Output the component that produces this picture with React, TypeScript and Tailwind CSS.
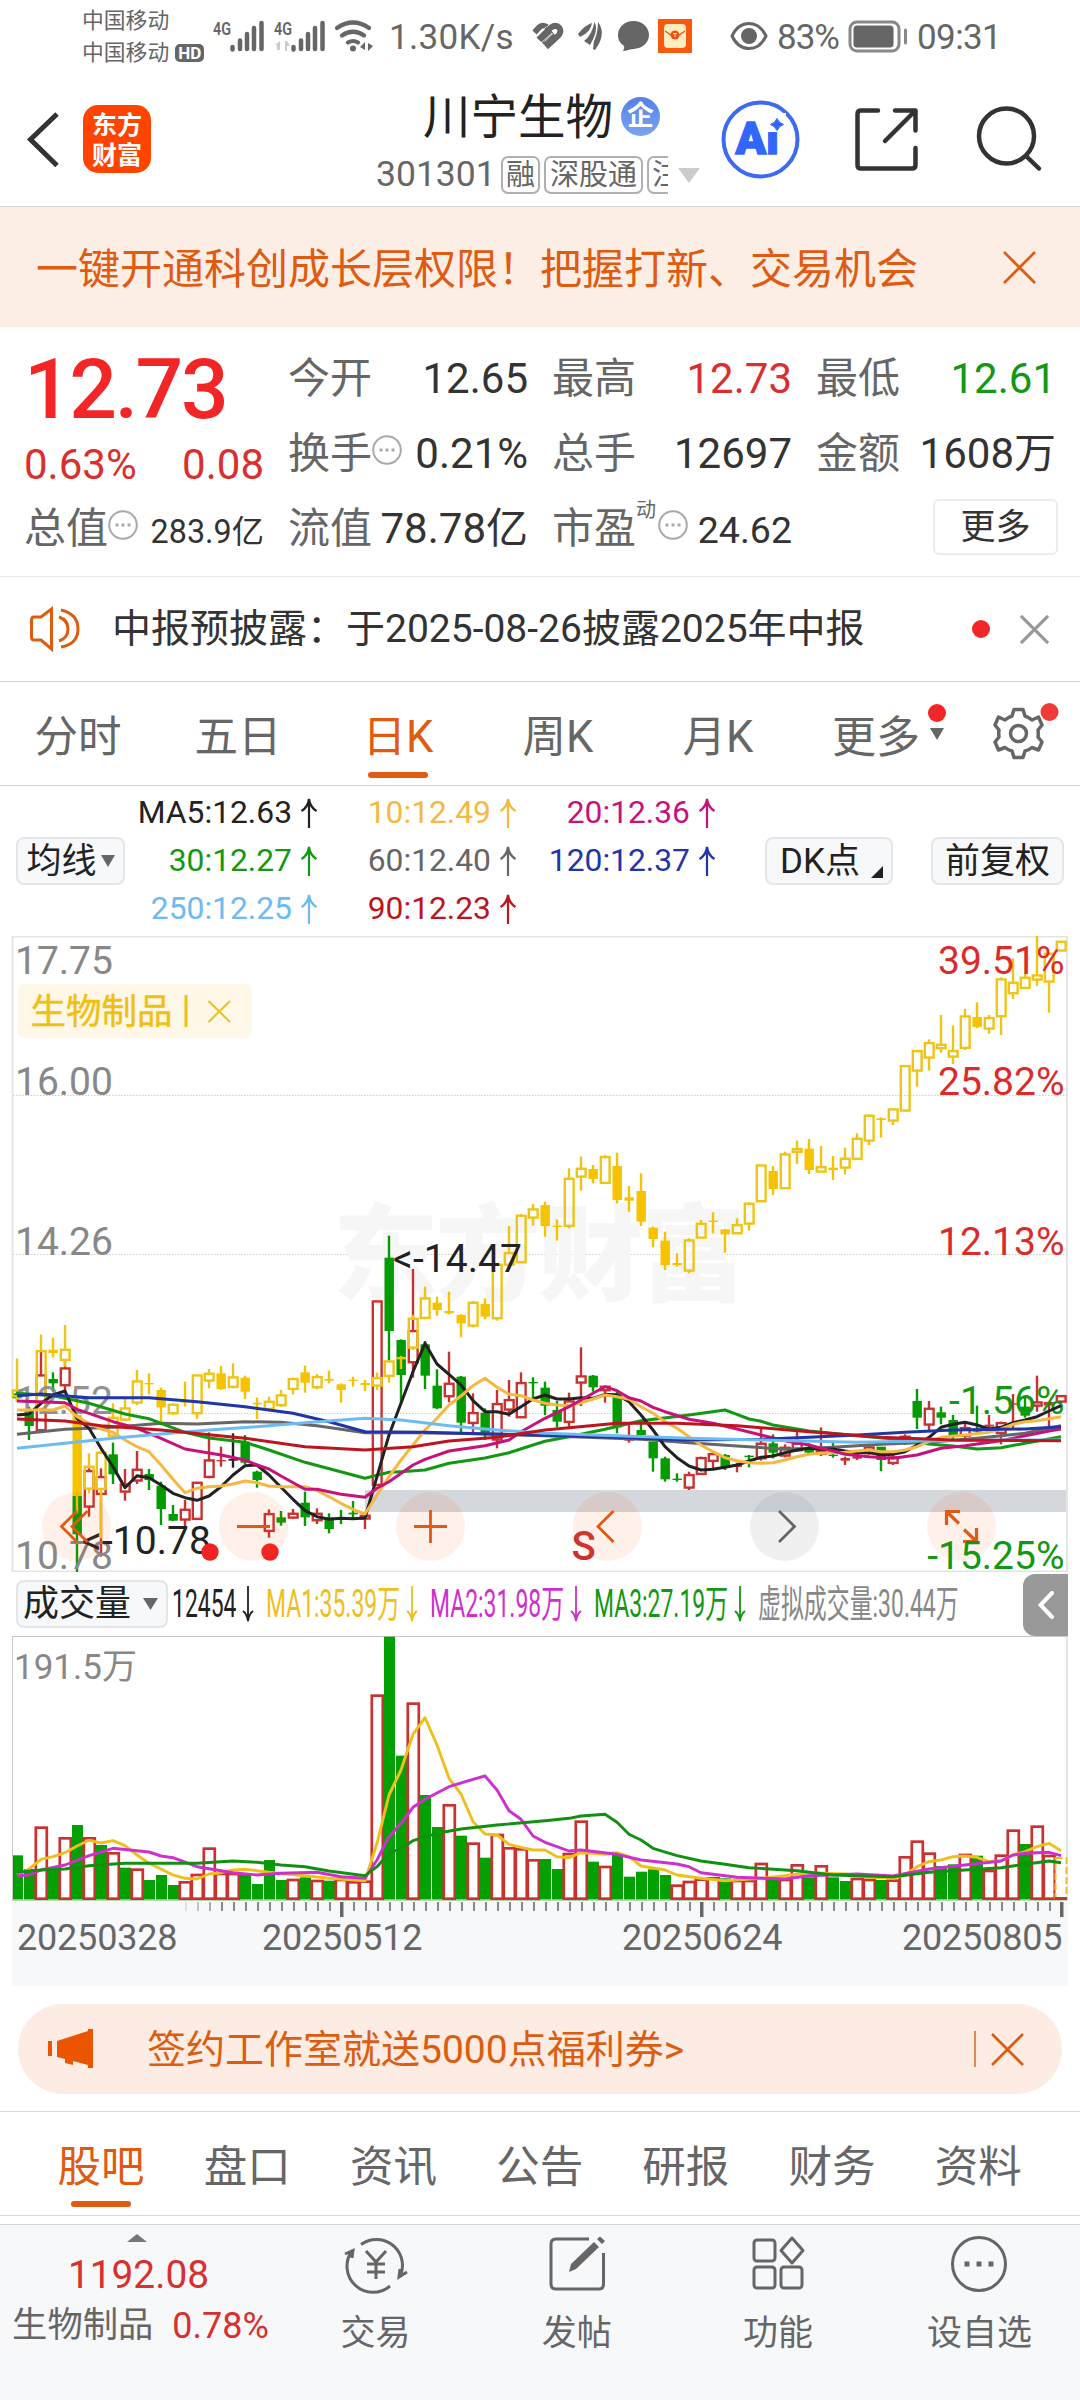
import { ReactNode } from "react";
import clsx from "clsx";

type Kind = "up" | "down" | "flat";
// index, kind, high, body top, body bottom, low (thirds of a pixel below BASE)
type Candle = [number, Kind, number, number, number, number];
type Point = [number, number];

const BASE = 1230;
const VOL_BASE = 1570;
const VOL_BOTTOM = 1899.5;

const RED = "#c93230";
const GREEN = "#029b02";
const YELLOW = "#efc416";

const xAt = (i: number) => 17 + 12 * i;
const yAt = (v: number) => BASE + v / 3;
const volY = (v: number) => VOL_BASE + v / 3;

const stock: Candle[] = [
  [0, "down", 480, 490, 505, 515], [1, "down", 530, 545, 588, 630], [2, "up", 365, 433, 604, 604],
  [3, "down", 427, 447, 460, 485], [4, "up", 392, 412, 469, 490], [5, "down", 780, 797, 913, 1028],
  [6, "up", 715, 720, 833, 860], [7, "up", 715, 738, 795, 980], [8, "down", 638, 673, 733, 762],
  [9, "up", 717, 760, 788, 812], [10, "up", 663, 716, 755, 762], [11, "down", 717, 732, 750, 780],
  [12, "down", 755, 767, 837, 885], [13, "down", 825, 852, 872, 873], [14, "up", 810, 836, 872, 893],
  [15, "up", 755, 755, 870, 870], [16, "up", 607, 688, 744, 745], [17, "up", 650, 690, 694, 710],
  [18, "flat", 610, 687, 692, 713], [19, "down", 615, 635, 698, 703], [20, "down", 722, 725, 750, 773],
  [21, "up", 838, 849, 906, 923], [22, "down", 843, 862, 878, 887], [23, "up", 837, 848, 866, 867],
  [24, "down", 785, 818, 862, 888], [25, "up", 835, 848, 874, 882], [26, "down", 850, 862, 897, 910],
  [27, "down", 840, 864, 868, 882], [28, "down", 813, 848, 853, 865], [29, "up", 845, 854, 869, 897],
  [30, "up", 211, 211, 768, 768], [31, "down", 17, 83, 303, 390], [32, "down", 328, 330, 435, 520],
  [33, "up", 117, 300, 400, 443], [34, "down", 333, 343, 437, 477], [35, "down", 418, 467, 535, 537],
  [36, "up", 365, 458, 502, 517], [37, "down", 438, 440, 578, 610], [38, "up", 490, 546, 582, 610],
  [39, "down", 535, 548, 615, 630], [40, "up", 480, 519, 632, 655], [41, "up", 450, 507, 542, 560],
  [42, "up", 427, 456, 565, 565], [43, "down", 442, 456, 460, 505], [44, "down", 455, 473, 527, 555],
  [45, "down", 513, 540, 575, 592], [46, "up", 488, 511, 579, 590], [47, "up", 352, 436, 461, 528],
  [48, "down", 435, 437, 472, 485], [49, "up", 467, 467, 484, 518], [50, "down", 480, 490, 592, 610],
  [51, "up", 580, 626, 632, 638], [52, "down", 575, 600, 615, 630], [53, "down", 635, 635, 685, 725],
  [54, "down", 680, 685, 748, 755], [55, "down", 730, 746, 750, 755], [56, "up", 725, 732, 776, 780],
  [57, "up", 680, 681, 735, 735], [58, "up", 665, 669, 696, 715], [59, "down", 672, 675, 713, 720],
  [60, "up", 698, 704, 711, 727], [61, "down", 675, 677, 681, 712], [62, "up", 597, 638, 688, 692],
  [63, "down", 613, 640, 668, 685], [64, "up", 643, 650, 680, 682], [65, "up", 605, 638, 664, 665],
  [66, "down", 640, 652, 668, 672], [67, "up", 592, 659, 675, 678], [68, "down", 635, 674, 678, 683],
  [69, "up", 680, 684, 692, 705], [70, "up", 665, 679, 686, 690], [71, "up", 640, 649, 673, 675],
  [72, "down", 650, 650, 690, 723], [73, "up", 675, 679, 702, 705], [74, "up", 613, 617, 642, 645],
  [75, "down", 477, 513, 563, 597], [76, "up", 513, 533, 587, 600], [77, "down", 530, 547, 563, 583],
  [78, "down", 555, 570, 620, 635], [79, "up", 580, 591, 620, 625], [80, "down", 527, 600, 605, 610],
  [81, "up", 555, 584, 590, 600], [82, "up", 575, 576, 612, 643], [83, "up", 492, 520, 524, 600],
  [84, "down", 500, 530, 557, 563], [85, "up", 437, 514, 530, 545], [86, "up", 515, 516, 526, 598],
  [87, "up", 495, 495, 518, 520],
];

const sector: Candle[] = [
  [0, "up", 385, 478, 502, 515], [2, "up", 313, 360, 540, 545], [3, "down", 323, 359, 369, 382],
  [4, "up", 285, 356, 393, 410], [5, "down", 500, 555, 797, 850], [6, "up", 670, 707, 779, 790],
  [7, "up", 655, 665, 780, 925], [8, "up", 520, 560, 620, 622], [9, "up", 500, 532, 572, 573],
  [10, "up", 420, 451, 521, 525], [11, "down", 430, 459, 463, 493], [12, "down", 473, 480, 532, 578],
  [13, "up", 520, 521, 553, 555], [14, "down", 455, 514, 518, 530], [15, "up", 433, 433, 553, 567],
  [16, "up", 417, 428, 455, 475], [17, "down", 408, 430, 477, 480], [18, "up", 400, 439, 474, 475],
  [19, "down", 437, 443, 485, 507], [20, "down", 503, 518, 523, 567], [21, "up", 500, 512, 540, 545],
  [22, "up", 480, 493, 529, 530], [23, "up", 443, 444, 480, 493], [24, "down", 407, 427, 458, 488],
  [25, "up", 432, 438, 475, 478], [26, "down", 422, 447, 452, 460], [27, "down", 460, 463, 480, 518],
  [28, "down", 440, 449, 453, 470], [29, "down", 450, 459, 465, 483], [30, "up", 428, 441, 470, 480],
  [31, "up", 390, 391, 441, 458], [32, "down", 378, 381, 388, 417], [33, "up", 255, 263, 356, 360],
  [34, "up", 170, 202, 267, 268], [35, "down", 200, 218, 240, 257], [36, "down", 185, 243, 250, 253],
  [37, "down", 252, 255, 280, 322], [38, "up", 213, 215, 290, 292], [39, "down", 205, 222, 260, 268],
  [40, "up", 100, 101, 268, 272], [41, "up", -12, 66, 107, 110], [42, "up", -48, -46, 100, 100],
  [43, "up", -78, -65, -34, -13], [44, "down", -85, -75, -12, 20], [45, "down", -32, -13, -9, 32],
  [46, "up", -185, -157, -9, -5], [47, "up", -220, -187, -157, -118], [48, "down", -195, -183, -153, -140],
  [49, "up", -225, -222, -138, -138], [50, "down", -232, -192, -90, -80], [51, "down", -132, -98, -88, -55],
  [52, "down", -170, -117, -25, -12], [53, "down", -10, -7, 27, 52], [54, "down", 5, 32, 105, 120],
  [55, "down", 70, 99, 105, 110], [56, "up", 25, 28, 125, 130], [57, "up", -30, -22, 26, 26],
  [58, "down", -53, -28, -24, 10], [59, "down", -3, -2, 13, 68], [60, "up", -35, -18, 13, 13],
  [61, "up", -83, -82, -16, 2], [62, "up", -197, -197, -83, -83], [63, "down", -192, -177, -123, -105],
  [64, "up", -235, -230, -122, -122], [65, "up", -268, -246, -231, -198], [66, "down", -273, -244, -180, -168],
  [67, "up", -252, -192, -172, -172], [68, "down", -222, -187, -180, -150], [69, "up", -247, -217, -184, -167],
  [70, "up", -290, -277, -210, -210], [71, "up", -347, -346, -265, -255], [72, "down", -338, -335, -330, -277],
  [73, "up", -365, -365, -325, -315], [74, "up", -495, -495, -355, -355], [75, "up", -540, -540, -475, -430],
  [76, "up", -572, -564, -514, -478], [77, "up", -645, -559, -542, -532], [78, "up", -613, -540, -517, -498],
  [79, "up", -663, -644, -543, -540], [80, "down", -683, -639, -609, -605], [81, "up", -645, -639, -601, -589],
  [82, "up", -758, -755, -638, -585], [83, "up", -815, -745, -707, -693], [84, "up", -770, -760, -723, -723],
  [85, "up", -882, -767, -748, -732], [86, "up", -833, -832, -742, -652], [87, "up", -868, -868, -835, -835],
];

const averages: { color: string; points: Point[] }[] = [
  {
    color: "#666666",
    points: [[0, 613], [4, 598], [8, 592], [12, 580], [15, 582], [19, 575], [22, 577], [25, 587], [29, 608], [33, 608], [40, 612], [44, 617], [52, 628], [56, 638], [60, 648], [64, 658], [68, 652], [72, 643], [76, 637], [80, 625], [84, 610], [87, 587]],
  },
  {
    color: "#129812",
    points: [[0, 490], [3, 497], [5, 512], [6, 520], [9, 552], [11, 566], [12, 580], [14, 607], [16, 624], [19, 637], [21, 660], [24, 697], [29, 745], [31, 727], [32, 725], [34, 720], [36, 700], [39, 684], [41, 668], [43, 645], [44, 634], [46, 620], [49, 598], [52, 572], [56, 555], [59, 540], [60, 553], [61, 567], [62, 574], [63, 585], [66, 603], [70, 617], [74, 630], [76, 642], [78, 648], [80, 657], [82, 653], [84, 640], [87, 620]],
  },
  {
    color: "#222222",
    points: [[0, 555], [1, 552], [2, 520], [3, 495], [4, 483], [5, 565], [6, 595], [7, 655], [8, 710], [9, 773], [10, 737], [11, 743], [12, 765], [13, 790], [14, 803], [15, 811], [16, 798], [17, 770], [18, 735], [19, 707], [20, 705], [21, 735], [22, 772], [23, 808], [24, 842], [25, 860], [26, 868], [27, 865], [28, 866], [29, 864], [30, 740], [31, 615], [32, 520], [33, 425], [34, 340], [35, 402], [36, 433], [37, 465], [38, 512], [39, 545], [40, 545], [41, 553], [42, 530], [43, 507], [44, 495], [45, 507], [46, 507], [47, 503], [48, 505], [49, 493], [50, 495], [51, 515], [52, 555], [53, 600], [54, 650], [55, 683], [56, 708], [57, 720], [58, 718], [59, 712], [60, 705], [61, 693], [62, 682], [63, 678], [64, 668], [65, 660], [66, 655], [67, 658], [68, 657], [69, 663], [70, 668], [71, 667], [72, 675], [73, 673], [74, 665], [75, 645], [76, 622], [77, 592], [78, 583], [79, 577], [80, 585], [81, 597], [82, 592], [83, 578], [84, 570], [85, 560], [86, 543], [87, 527]],
  },
  {
    color: "#f5b942",
    points: [[0, 540], [3, 540], [4, 528], [5, 560], [6, 580], [7, 597], [8, 607], [9, 630], [10, 650], [11, 665], [12, 705], [13, 748], [14, 788], [15, 775], [16, 770], [17, 768], [18, 762], [19, 753], [20, 758], [21, 768], [22, 770], [24, 770], [25, 782], [26, 800], [27, 820], [28, 838], [29, 852], [30, 795], [31, 740], [32, 690], [33, 645], [34, 600], [35, 565], [36, 525], [37, 498], [38, 467], [39, 445], [40, 472], [41, 493], [42, 497], [43, 510], [44, 520], [45, 525], [46, 527], [47, 518], [48, 507], [49, 495], [50, 500], [51, 508], [52, 530], [53, 550], [54, 575], [55, 595], [56, 620], [57, 645], [58, 665], [59, 683], [60, 692], [61, 698], [62, 700], [63, 698], [64, 690], [65, 680], [66, 673], [67, 670], [69, 667], [70, 663], [71, 660], [72, 665], [73, 665], [74, 660], [75, 650], [76, 635], [77, 622], [79, 615], [81, 607], [82, 597], [83, 583], [84, 575], [85, 572], [87, 560]],
  },
  {
    color: "#c9117c",
    points: [[0, 513], [3, 517], [4, 518], [5, 538], [6, 550], [8, 575], [10, 595], [12, 625], [14, 657], [17, 675], [19, 690], [20, 705], [21, 717], [22, 738], [24, 778], [25, 778], [27, 793], [29, 802], [30, 775], [31, 755], [33, 705], [34, 688], [36, 663], [39, 647], [41, 630], [42, 605], [44, 565], [46, 530], [48, 490], [49, 470], [50, 482], [51, 503], [52, 513], [53, 532], [54, 545], [56, 568], [58, 580], [60, 597], [62, 615], [64, 632], [66, 645], [67, 655], [68, 663], [69, 673], [71, 680], [73, 685], [75, 675], [77, 655], [79, 647], [80, 642], [82, 632], [84, 617], [86, 603], [87, 597]],
  },
  {
    color: "#1f35a8",
    points: [[0, 497], [2, 492], [6, 503], [11, 503], [15, 515], [19, 530], [23, 550], [26, 575], [29, 605], [34, 607], [40, 613], [44, 616], [50, 622], [56, 630], [62, 628], [66, 622], [70, 615], [74, 607], [78, 600], [84, 597], [87, 590]],
  },
  {
    color: "#6dbbf0",
    points: [[0, 655], [4, 640], [8, 625], [12, 612], [16, 600], [20, 590], [24, 578], [29, 565], [32, 570], [36, 587], [40, 600], [44, 610], [50, 617], [56, 625], [62, 630], [70, 637], [76, 633], [82, 630], [87, 630]],
  },
  {
    color: "#bd1520",
    points: [[0, 567], [4, 573], [7, 587], [12, 600], [19, 625], [24, 650], [29, 660], [33, 650], [36, 633], [40, 622], [44, 600], [50, 580], [55, 580], [60, 587], [66, 605], [72, 622], [78, 630], [87, 632]],
  },
];

const volumeTops = [
  856, 897, 773, 895, 805, 765, 805, 825, 850, 893, 899, 930, 915, 945, 937, 915, 836, 912, 912, 915, 942, 870,
  930, 930, 922, 933, 932, 930, 937, 935, 377, 200, 557, 401, 675, 771, 706, 797, 821, 863, 795, 835, 838, 871,
  867, 897, 852, 755, 875, 891, 855, 920, 905, 898, 915, 947, 936, 929, 925, 925, 933, 933, 882, 928, 930, 886,
  922, 889, 922, 933, 927, 930, 930, 932, 862, 815, 851, 888, 883, 855, 857, 903, 857, 782, 822, 770, 858,
];
const volumeUp = new Set([
  2, 4, 6, 8, 10, 14, 15, 16, 17, 18, 23, 25, 27, 28, 29, 30, 33, 36, 38, 40, 41, 42, 43, 46, 47, 49, 55, 56, 57,
  58, 60, 61, 62, 64, 65, 67, 70, 71, 73, 74, 75, 76, 79, 81, 82, 83, 85, 86,
]);

const volumeAverages: { color: string; points: Point[] }[] = [
  {
    color: "#efc01c",
    points: [[0, 914], [1, 897], [2, 868], [3, 860], [4, 848], [5, 828], [6, 811], [7, 819], [8, 812], [9, 827], [10, 855], [11, 880], [12, 897], [13, 915], [14, 925], [15, 927], [16, 912], [17, 908], [18, 900], [19, 898], [20, 902], [21, 907], [24, 917], [26, 925], [29, 932], [30, 820], [31, 675], [32, 600], [33, 493], [34, 443], [35, 525], [36, 625], [37, 672], [38, 755], [39, 792], [40, 795], [41, 823], [42, 832], [43, 840], [44, 840], [45, 860], [46, 863], [47, 848], [48, 850], [49, 853], [50, 848], [51, 860], [52, 888], [54, 900], [55, 915], [57, 925], [59, 932], [62, 925], [64, 917], [66, 908], [69, 912], [71, 922], [73, 925], [74, 915], [75, 890], [76, 875], [77, 870], [78, 860], [79, 858], [80, 862], [81, 875], [82, 873], [83, 855], [84, 845], [85, 830], [86, 820], [87, 842]],
  },
  {
    color: "#cf2fd0",
    points: [[0, 917], [1, 915], [2, 900], [4, 885], [6, 857], [8, 835], [11, 846], [12, 858], [13, 863], [15, 890], [18, 908], [20, 915], [22, 910], [25, 907], [27, 920], [29, 925], [30, 870], [31, 800], [32, 760], [33, 712], [34, 688], [36, 650], [38, 628], [39, 618], [40, 660], [41, 722], [42, 748], [43, 798], [44, 817], [45, 830], [46, 843], [47, 840], [50, 853], [52, 870], [55, 882], [56, 890], [57, 908], [60, 922], [64, 927], [66, 917], [70, 912], [73, 918], [76, 897], [79, 885], [82, 873], [83, 855], [84, 850], [86, 847], [87, 857]],
  },
  {
    color: "#129012",
    points: [[0, 907], [2, 900], [4, 897], [6, 887], [9, 880], [15, 880], [18, 873], [20, 877], [22, 885], [24, 890], [26, 903], [29, 917], [30, 890], [31, 850], [32, 835], [33, 812], [35, 790], [37, 777], [40, 765], [44, 752], [46, 745], [47, 738], [49, 733], [50, 757], [51, 793], [52, 810], [53, 835], [55, 857], [57, 873], [59, 883], [61, 893], [65, 902], [68, 915], [70, 917], [73, 920], [76, 907], [79, 900], [82, 893], [84, 883], [86, 873], [87, 878]],
  },
];

const toLine = (points: Point[], y: (v: number) => number) =>
  points.map(([i, v]) => `${xAt(i)},${y(v).toFixed(1)}`).join(" ");

function Candles({ data, up, down }: { data: Candle[]; up: string; down: string }) {
  return (
    <g>
      {data.map(([i, kind, high, top, bottom, low]) => {
        const color = kind === "up" ? up : kind === "down" ? down : "#222";
        const x = xAt(i);
        const hollow = kind === "up" && bottom - top > 8;
        return (
          <g key={i} stroke={color} strokeWidth="2.4">
            {high < top && <line x1={x} x2={x} y1={yAt(high)} y2={yAt(top) + 1} />}
            {low > bottom && <line x1={x} x2={x} y1={yAt(bottom) - 1} y2={yAt(low)} />}
            {hollow ? (
              <rect x={x - 4.2} width="8.8" y={yAt(top) + 1.1} height={(bottom - top) / 3 - 2.2} fill="none" />
            ) : (
              <rect x={x - 4.5} width="9.400" y={yAt(top)} height={(bottom - top) / 3} fill={color} stroke="none" />
            )}
          </g>
        );
      })}
    </g>
  );
}

function Cross({ className }: { className: string }) {
  return (
    <svg viewBox="0 0 32 32" className={className} stroke="currentColor" fill="none">
      <path d="M1 1L31 31M31 1L1 31" />
    </svg>
  );
}

function StatusBar() {
  return (
    <div className="flex h-[72px] items-start text-[#666]">
      <div className="ml-[82px] w-[131px] pt-[5px] text-[21.8px] leading-[32px]">
        <div className="h-8">中国移动</div>
        <div className="flex h-8 items-center">
          中国移动
          <span className="ml-[6px] flex h-[18px] w-[29px] items-center justify-center rounded-[5px] bg-[#666] text-[17px] leading-none font-bold text-white">
            HD
          </span>
        </div>
      </div>
      <Signal />
      <Signal muted />
      <svg viewBox="334 18 38 36" className="mt-[18px] h-9 w-[38px]" fill="none" stroke="#666" strokeWidth="4.2" strokeLinecap="round">
        <path d="M336 28Q352 17 368 28M341 35.500Q352 28 363 35.500M347 42.500Q352 39.500 357 42.500" />
        <circle cx="352" cy="48.5" r="3" fill="#666" stroke="none" />
        <path d="M364 42V50L359 47ZM367 51V43L372 46Z" fill="#666" stroke="none" />
      </svg>
      <div className="ml-[16px] mt-[20px] w-[123px] text-[35px] leading-[36px] tracking-[0.3px] whitespace-nowrap">1.30K/s</div>
      <svg viewBox="532 22 32 28" className="ml-[20px] mt-[22px] h-7 w-8" fill="none" stroke="#666" strokeWidth="5.800">
        <path d="M534.500 32.500L539 27.500Q542 24 547 27M538.500 39.500L551 27.500Q556 24 559.500 28Q562 32 557.500 36.500L546 47M542 42.500L553 32.500" />
        <path d="M536.500 35.800L546.500 26.500M540.500 43.500L552 33M544.500 41.500L554 32.500" stroke="#fff" strokeWidth="0.800" />
      </svg>
      <svg viewBox="577 21 26 30" className="ml-[13px] mt-[21px] h-[30px] w-[26px]" fill="#666">
        <path d="M578 34Q585 25 592 23Q591 32 580 37ZM584 41Q592 35 594.500 22Q599 30 590 45ZM593 49L594 41Q598 33 598 22Q607 34 595 50Z" />
      </svg>
      <svg viewBox="616 20 33 32" className="ml-[14px] mt-[20px] h-8 w-[33px]" fill="#666">
        <path d="M632.5 21C641 21 648 27 648 35C648 43 641 48.500 632.500 49C630 49 625 51 622 51Q624 48 623 46C619 43 617 40 617 35C617 27 624 21 632.500 21Z" />
      </svg>
      <svg viewBox="656 18 36 36" className="ml-[7px] mt-[18px] h-9 w-9">
        <rect x="657" y="19" width="34" height="34" fill="#f75a0c" />
        <rect x="663" y="24" width="22" height="24" rx="4" fill="#ffedc0" />
        <path d="M664 31L670 35H678L684 31" fill="none" stroke="#f05010" strokeWidth="1.300" />
        <circle cx="674" cy="35" r="4.500" fill="#f05010" />
        <path d="M672 33.500H676M674 33.500V37" stroke="#ffedc0" />
      </svg>
      <svg viewBox="729 20 38 32" className="ml-[37px] mt-[20px] h-8 w-[38px]" fill="none" stroke="#666" strokeWidth="3">
        <path d="M731 36Q737 23.500 748 23.500Q759 23.500 765 36Q759 48.500 748 48.500Q737 48.500 731 36Z" />
        <circle cx="748" cy="36" r="6.500" fill="#666" />
      </svg>
      <div className="ml-[9px] mt-[20px] w-[71px] text-[35px] leading-[36px] tracking-[-1px]">83%</div>
      <svg viewBox="846 20 60 33" className="mt-[20px] h-[33px] w-[60px]" fill="none" stroke="#888" strokeWidth="3">
        <rect x="848" y="22" width="49" height="29" rx="7" />
        <rect x="853" y="27" width="37" height="19" rx="2" fill="#666" stroke="#666" />
        <path d="M903.500 30V43" strokeLinecap="round" />
      </svg>
      <div className="ml-[9px] mt-[20px] text-[35px] leading-[36px] tracking-[-0.6px]">09:31</div>
    </div>
  );
}

function Signal({ muted = false }: { muted?: boolean }) {
  return (
    <svg viewBox="213 18 61 36" className="mt-[18px] h-9 w-[61px]">
      <text x="213" y="34.500" fontSize="17.500" fontWeight="600" fill="#666" textLength="18" lengthAdjust="spacingAndGlyphs">4G</text>
      {muted && <path d="M219 41V50H216V45H214ZM224 51V41H226L229 46H226V51Z" fill="#ccc" />}
      <path d="M232.500 47V49.500M240 40.500V49M247 34V49M254 28V49M261.500 23V49" stroke="#666" strokeWidth="4.500" strokeLinecap="round" />
    </svg>
  );
}

function Header() {
  return (
    <header className="flex h-[135px] border-b border-[#d6d6d6]">
      <svg viewBox="24 106 40 66" className="ml-[24px] mt-[34px] h-[66px] w-10" fill="none" stroke="#333" strokeWidth="5">
        <path d="M57 114L30.500 139.500L57 165.500" />
      </svg>
      <div className="ml-[19px] mt-[33px] flex h-[68px] w-[68px] flex-col items-center rounded-[15px] bg-[#ff4400] pt-[6px] text-[25px] leading-[30px] font-bold text-white">
        <span>东方</span>
        <span>财富</span>
      </div>
      <div className="ml-[225px] mt-[18px] w-[324px]">
        <div className="flex h-[52px] items-center">
          <span className="mt-[5px] ml-[47px] w-[189px] text-[47.5px] leading-none whitespace-nowrap text-[#222]">川宁生物</span>
          <span className="ml-[9px] flex size-[39px] items-center justify-center rounded-full bg-linear-to-b from-[#5580e8] to-[#7aa5ef] text-[27px] leading-none font-bold text-white">
            企
          </span>
        </div>
        <div className="mt-[10px] flex h-[46px] items-center text-[#666]">
          <span className="w-[125px] text-[35.5px] leading-none">301301</span>
          <div className="flex w-[167px] gap-[4px] overflow-hidden text-[29px] leading-[34px] whitespace-nowrap">
            <span className="shrink-0 rounded-[7px] border-2 border-[#b0b0b0] px-[3px]">融</span>
            <span className="shrink-0 rounded-[7px] border-2 border-[#b0b0b0] px-[4px]">深股通</span>
            <span className="shrink-0 rounded-[7px] border-2 border-[#b0b0b0] px-[3px]">注</span>
          </div>
          <svg viewBox="0 0 22 15" className="ml-[10px] h-[15px] w-[22px] fill-[#ccc]">
            <path d="M0 0H22L11 15Z" />
          </svg>
        </div>
      </div>
      <svg viewBox="720 98 82 84" className="ml-[20px] mt-[26px] h-[84px] w-[82px]">
        <circle cx="760.500" cy="139.500" r="37" fill="none" stroke="#3d6bf0" strokeWidth="4" />
        <text x="735.500" y="153.500" fontSize="45" fontWeight="900" fill="#3366ff" stroke="#3366ff" strokeWidth="1.500">Ai</text>
        <rect x="766" y="113" width="20" height="19" fill="#fff" />
        <path d="M777 118.500Q779 123 783.500 124.500Q779 126 777 130.500Q775 126 770.500 124.500Q775 123 777 118.500Z" fill="#3366ff" stroke="#3366ff" />
      </svg>
      <svg viewBox="850 102 72 74" className="ml-[48px] mt-[30px] h-[74px] w-[72px]" fill="none" stroke="#333" strokeWidth="4.500" strokeLinecap="round" strokeLinejoin="round">
        <path d="M878 110.500H861Q857.500 110.500 857.500 114V165Q857.500 168.500 861 168.500H912Q915.500 168.500 915.500 165V148M895 110.500H915.500V130.500M915 111L885 141" />
      </svg>
      <svg viewBox="972 102 74 74" className="ml-[50px] mt-[30px] h-[74px] w-[74px]" fill="none" stroke="#333" strokeWidth="4.500" strokeLinecap="round">
        <circle cx="1006.500" cy="136" r="27.500" />
        <path d="M1026 156L1039 168.500" />
      </svg>
    </header>
  );
}

function Info() {
  return (
    <svg viewBox="0 0 30 30" className="h-[30px] w-[30px] shrink-0 -translate-y-[4px]">
      <circle cx="15" cy="15" r="13.800" fill="none" stroke="#aaa" strokeWidth="2" />
      <path d="M7.500 13.500h3v3h-3zM13.500 13.500h3v3h-3zM19.500 13.500h3v3h-3z" fill="#aaa" />
    </svg>
  );
}

interface StatProps {
  label: ReactNode;
  value?: ReactNode;
  tone?: string;
}

function Stat({ label, value, tone = "text-[#333]" }: StatProps) {
  return (
    <div className="flex h-[75px] items-center justify-between leading-none whitespace-nowrap">
      <span className="flex items-center text-[#666]">{label}</span>
      <span className={tone}>{value}</span>
    </div>
  );
}

function Quote() {
  return (
    <section className="grid h-[250px] grid-cols-4 gap-x-[24px] border-b border-[#e8e8e8] px-[24px] pt-[14px] text-[42px]">
      <div>
        <div className="flex h-[98px] items-center text-[84px] leading-none font-medium tracking-[-2.4px] text-[#f22626]">12.73</div>
        <div className="flex h-[52px] items-center justify-between leading-none text-[#d92f2f]">
          <span>0.63%</span>
          <span>0.08</span>
        </div>
        <Stat label={<>总值<Info /></>} value={<span className="text-[32.3px]">283.9亿</span>} />
      </div>
      <div>
        <Stat label="今开" value="12.65" />
        <Stat label={<>换手<Info /></>} value="0.21%" />
        <Stat label="流值" value="78.78亿" />
      </div>
      <div>
        <Stat label="最高" value="12.73" tone="text-[#d92f2f]" />
        <Stat label="总手" value="12697" />
        <Stat
          label={
            <>
              市盈<span className="mb-[38px] w-[22px] text-[20px]">动</span>
              <Info />
            </>
          }
          value={<span className="text-[37.5px]">24.62</span>}
        />
      </div>
      <div>
        <Stat label="最低" value="12.61" tone="text-[#129812]" />
        <Stat label="金额" value="1608万" />
        <div className="flex h-[75px] items-center justify-end">
          <span className="-mt-[3px] -mr-[2px] flex h-[56px] w-[125px] items-center justify-center rounded-[6px] border-2 border-[#ececec] text-[35px] leading-none text-[#333]">
            更多
          </span>
        </div>
      </div>
    </section>
  );
}

function Notice() {
  return (
    <section className="flex h-[105px] items-center border-b border-[#d6d6d6]">
      <svg viewBox="28 604 54 50" className="ml-[28px] h-[50px] w-[54px]" fill="none" stroke="#dd5d10" strokeWidth="3">
        <path d="M51.500 609V649L41 640H34Q31.500 640 31.500 637V620Q31.500 617 34 617H41ZM59 617Q68 620 68 629Q68 638 59 641M61 610Q78 614 78 629Q78 644 61 647" />
      </svg>
      <p className="ml-[30px] w-[850px] text-[39px] leading-none whitespace-nowrap text-[#333]">中报预披露：于2025-08-26披露2025年中报</p>
      <span className="ml-[10px] size-[18px] rounded-full bg-[#f22626]" />
      <Cross className="ml-[30px] size-[29px] stroke-[3.500] text-[#999]" />
    </section>
  );
}

function PeriodTabs() {
  return (
    <nav className="flex h-[104px] border-b border-[#d6d6d6] text-[43.5px] leading-none text-[#666]">
      <div className="-ml-[2px] flex">
        {["分时", "五日", "日K", "周K", "月K"].map((tab) => (
          <div key={tab} className={clsx("flex w-[160px] flex-col items-center pt-[34px]", tab === "日K" && "text-[#e05a10]")}>
            {tab}
            {tab === "日K" && <span className="mt-[12px] h-[6px] w-[60px] rounded-full bg-[#e05a10]" />}
          </div>
        ))}
      </div>
      <div className="ml-[34px] w-[96px] pt-[34px] text-[44px] whitespace-nowrap">更多</div>
      <div className="flex w-[18px] flex-col items-center pt-[22px]">
        <span className="size-[18px] rounded-full bg-[#f22626]" />
        <svg viewBox="0 0 14 12" className="mt-[6px] h-3 w-3.5 fill-[#666]">
          <path d="M0 0H14L7 12Z" />
        </svg>
      </div>
      <svg viewBox="990 700 70 62" className="ml-[44px] mt-[18px] h-[62px] w-[70px]" fill="none" stroke="#666" strokeWidth="3.500">
        <path d="M1014 709.500H1023L1025 716Q1029 717.500 1032 720L1038.500 717L1042 725L1038 730Q1038.500 733.500 1038 737L1042 742L1038.500 750L1032 747.500Q1029 750 1025 751L1023 757.500H1014L1012 751Q1008 750 1005 747.500L998.500 750L995 742L999 737Q998.500 733.500 999 730L995 725L998.500 717L1005 720Q1008 717.500 1012 716Z" strokeLinejoin="round" />
        <circle cx="1018.500" cy="733.500" r="8" />
        <circle cx="1049.500" cy="712" r="9" fill="#f23a3a" stroke="none" />
      </svg>
    </nav>
  );
}

const maLegend = [
  { label: "MA5:12.63", className: "text-[#222]" },
  { label: "10:12.49", className: "text-[#f5b942]" },
  { label: "20:12.36", className: "text-[#c9117c]" },
  { label: "30:12.27", className: "text-[#129812]" },
  { label: "60:12.40", className: "text-[#666]" },
  { label: "120:12.37", className: "text-[#1f35a8]" },
  { label: "250:12.25", className: "text-[#6dbbf0]" },
  { label: "90:12.23", className: "text-[#bd1520]" },
];

function AverageLegend() {
  return (
    <section className="flex h-[150px] items-center text-[35px] leading-none whitespace-nowrap text-[#222]">
      <div className="ml-4 flex h-[48px] w-[109px] items-center justify-center gap-[4px] rounded-[8px] border-2 border-[#e3e5e9] bg-[#f7f8fa]">
        均线
        <svg viewBox="0 0 14 12" className="h-3 w-3.5 fill-[#666]">
          <path d="M0 0H14L7 12Z" />
        </svg>
      </div>
      <div className="grid grid-cols-[192px_199px_199px] grid-rows-[48px_48px_48px]">
        {maLegend.map(({ label, className }) => (
          <div key={label} className={clsx("flex items-center justify-end gap-[9px] text-[31.8px]", className)}>
            {label}
            <svg viewBox="0 0 16 30" className="h-[30px] w-4" fill="none" stroke="currentColor" strokeWidth="2.200">
              <path d="M8 30V2M0.500 13Q7 9 8 1Q9 9 15.500 13" />
            </svg>
          </div>
        ))}
      </div>
      <div className="ml-[50px] flex h-[48px] w-[128px] items-center rounded-[8px] border-2 border-[#e3e5e9] bg-[#f7f8fa] pl-[13px]">
        DK点
        <svg viewBox="0 0 12 12" className="mt-[22px] ml-[11px] size-3 fill-[#222]">
          <path d="M12 0V12H0Z" />
        </svg>
      </div>
      <div className="ml-[38px] flex h-[48px] w-[133px] items-center justify-center rounded-[8px] border-2 border-[#e3e5e9] bg-[#f7f8fa]">
        前复权
      </div>
    </section>
  );
}

function PriceChart() {
  return (
    <svg viewBox="0 936 1080 636" className="block h-[636px] w-[1080px]">
      <g stroke="#ccc" strokeWidth="1" strokeDasharray="1.500 1.500">
        <path d="M13 1095.500H1067M13 1254.500H1067M13 1413.500H1067" />
      </g>
      <text x="333" y="1292" fontSize="105" fontWeight="900" fill="#f6f6f6" textLength="413">东方财富</text>
      <rect x="365" y="1490" width="702" height="22" fill="#d4d7dc" />
      <rect x="12.500" y="936.500" width="1054.500" height="635" fill="none" stroke="#e3e3e3" strokeWidth="1.800" />
      <Candles data={stock} up={RED} down={GREEN} />
      <Candles data={sector} up={YELLOW} down="#f7c300" />
      <g fontSize="39" fill="#888">
        <text x="15" y="974">17.75</text>
        <text x="15" y="1095">16.00</text>
        <text x="15" y="1255">14.26</text>
        <text x="15" y="1413.500" opacity="0.9">12.52</text>
        <text x="15" y="1569">10.78</text>
      </g>
      <g fontSize="39" textAnchor="end" fill="#dc2a2a">
        <text x="1064.500" y="974">39.51%</text>
        <text x="1064.500" y="1095">25.82%</text>
        <text x="1064.500" y="1255">12.13%</text>
        <text x="1064.500" y="1413.500" fill="#129812">-1.56%</text>
      </g>
      <g fill="none" strokeWidth="3" strokeLinejoin="round">
        {averages.map(({ color, points }) => (
          <polyline key={color} points={toLine(points, yAt)} stroke={color} />
        ))}
      </g>
      <g fontSize="39" fill="#222">
        <text x="393" y="1272" textLength="129">&lt;-14.47</text>
        <text x="82" y="1554" textLength="129">&lt;-10.78</text>
      </g>
      <circle cx="210" cy="1552" r="8.700" fill="#f22222" />
      <circle cx="270" cy="1552" r="8.700" fill="#f22222" />
      <text x="571.500" y="1560" fontSize="40" fontWeight="500" fill={RED}>S</text>

      <g fill="#ff5a14" fillOpacity="0.09">
        {[76.5, 253.5, 430.5, 607.5, 961.5].map((cx) => (
          <circle key={cx} cx={cx} cy="1526.500" r="34.500" />
        ))}
        <circle cx="784.500" cy="1526.500" r="34.500" fill="#555" />
      </g>
      <g fill="none" stroke="#e05a10" strokeWidth="2.800">
        <path d="M77 1511L61.500 1526.500L77 1542M87.500 1511L72 1526.500L87.500 1542M237 1526.500H270M414 1526.500H447M430.500 1510V1543M613.500 1511L598 1526.500L613.500 1542" />
        <path d="M779 1511L794.500 1526.500L779 1542" stroke="#666" />
        <path d="M946.500 1525V1511.500H960M947 1512L959 1523.500M976.500 1528V1541.500H963M976 1541L964 1529.500" strokeWidth="3.200" />
      </g>
      <text x="1064.500" y="1569" fontSize="39" textAnchor="end" fill="#129812">-15.25%</text>

      <rect x="18" y="984" width="234" height="54" rx="6" fill="#fff8e8" />
      <text x="30.500" y="1024" fontSize="35.500" fill="#f0c010" stroke="#f0c010" strokeWidth="0.400">生物制品</text>
      <path d="M186 995V1027" stroke="#f0c010" strokeWidth="3" />
      <path d="M208.500 1001L230 1022M230 1001L208.500 1022" stroke="#f0c010" strokeWidth="2" />
    </svg>
  );
}

const volumeLegend = [
  { label: "12454", box: "w-[70px]", className: "text-[#222]" },
  { label: "MA1:35.39万", box: "w-[140px]", className: "text-[#efc01c]" },
  { label: "MA2:31.98万", box: "w-[140px]", className: "text-[#cf2fd0]" },
  { label: "MA3:27.19万", box: "w-[140px]", className: "text-[#129812]" },
];

function VolumeLegend() {
  return (
    <section className="flex h-[64px] items-center text-[38px] leading-none whitespace-nowrap">
      <div className="ml-4 flex h-[48px] w-[152px] items-center rounded-[8px] border-2 border-[#e3e5e9] bg-[#f7f8fa] pl-[5px] text-[36px] text-[#222]">
        成交量
        <svg viewBox="0 0 15 12" className="ml-[12px] h-3 w-[15px] fill-[#666]">
          <path d="M0 0H15L7.500 12Z" />
        </svg>
      </div>
      <div className="ml-[4px] flex gap-[12px]">
        {volumeLegend.map(({ label, box, className }) => (
          <div key={label} className={clsx("flex items-center", className)}>
            <span className={box}>
              <span className="inline-block origin-left scale-x-[0.603]">{label}</span>
            </span>
            <svg viewBox="0 0 12 36" className="h-9 w-3" fill="none" stroke="currentColor" strokeWidth="1.800">
              <path d="M6 0V34M1 25Q5 28 6 35Q7 28 11 25" />
            </svg>
          </div>
        ))}
      </div>
      <span className="ml-[12px] w-[265px] text-[#888]">
        <span className="inline-block origin-left scale-x-[0.603]">虚拟成交量:30.44万</span>
      </span>
      <div className="mt-[2px] flex h-[62px] w-[45px] items-center justify-center rounded-l-[12px] bg-[#999]">
        <svg viewBox="0 0 16 28" className="h-7 w-4" fill="none" stroke="#fff" strokeWidth="4" strokeLinecap="round">
          <path d="M14 2L2.500 14L14 26" />
        </svg>
      </div>
    </section>
  );
}

function VolumeChart() {
  return (
    <svg viewBox="0 1636 1080 266" className="block h-[266px] w-[1080px]">
      <rect x="12.500" y="1636.500" width="1054.500" height="264" fill="none" stroke="#c8c8c8" />
      <text x="14" y="1679" fontSize="35" fill="#888">191.5万</text>
      {volumeTops.map((v, i) => {
        const y = volY(v);
        const x = xAt(i);
        return volumeUp.has(i) ? (
          <rect key={i} x={x - 5.2} width="11" y={y} height={VOL_BOTTOM - y - 0.8} fill="#fff" stroke={RED} strokeWidth="2.700" />
        ) : (
          <rect key={i} x={Math.max(x - 5, 13)} width={i === 0 ? 10 : 11} y={y} height={VOL_BOTTOM - y} fill="#03a003" />
        );
      })}
      <rect x="1055.500" y="1858" width="11" height="40" fill="#fff" stroke="#efc01c" strokeWidth="2" strokeDasharray="7 3" />
      <path d="M1055 1898.500H1067" stroke={RED} strokeWidth="3" />
      <g fill="none" strokeWidth="2.900" strokeLinejoin="round">
        {volumeAverages.map(({ color, points }) => (
          <polyline key={color} points={toLine(points, volY)} stroke={color} />
        ))}
      </g>
      <path d="M13 1900.500H1067" stroke="#b5d8b0" />
    </svg>
  );
}

function TimeAxis() {
  const ticks = Array.from({ length: 74 }, (_, k) => k);
  return (
    <section className="mr-[12px] ml-[12px] h-[84px] bg-[#f7f8fa]">
      <svg viewBox="12 1902 1056 16" className="block h-4 w-[1056px]">
        {ticks.map((k) => {
          const major = k === 13 || k === 43 || k === 73;
          return (
            <rect
              key={k}
              x={(major ? 184 : 185) + 12 * k}
              y="1902"
              width={major ? 3.5 : 2}
              height={major ? 15 : 9}
              fill={major ? "#666" : "#888"}
              opacity={k < 3 ? 0.2 + k * 0.25 : 1}
            />
          );
        })}
      </svg>
      <div className="flex pt-[2px] text-[36px] leading-none tracking-[-0.2px] text-[#666]">
        <span className="ml-[5px] w-[245px]">20250328</span>
        <span className="w-[360px]">20250512</span>
        <span className="w-[280px]">20250624</span>
        <span>20250805</span>
      </div>
    </section>
  );
}

function Promo() {
  return (
    <section className="h-[126px] border-b border-[#d6d6d6] px-[18px] pt-[18px]">
      <div className="flex h-[90px] items-center rounded-full bg-[#fcece3] text-[#dd5d10]">
        <svg viewBox="46 2027 50 44" className="ml-[28px] h-11 w-[50px]" fill="#ec5500">
          <path d="M48 2041H52V2056H48ZM57 2041L88 2031V2029H93V2068H88V2065L73 2061V2065L65 2063V2059L57 2057Z" />
        </svg>
        <p className="mt-[2px] ml-[51px] w-[827px] text-[39px] leading-none whitespace-nowrap">签约工作室就送5000点福利券&gt;</p>
        <span className="h-9 w-[1.5px] bg-[#dd8a5a]" />
        <Cross className="ml-[15px] size-[33px] stroke-[2.600]" />
      </div>
    </section>
  );
}

function ContentTabs() {
  return (
    <nav className="flex h-[104px] border-b border-[#d6d6d6] px-[28px] text-[43.5px] leading-none text-[#666]">
      {["股吧", "盘口", "资讯", "公告", "研报", "财务", "资料"].map((tab, i) => (
        <div key={tab} className={clsx("flex w-[146.2px] flex-col items-center pt-[34px]", i === 0 && "text-[#e05a10]")}>
          {tab}
          {i === 0 && <span className="mt-[11px] h-[6px] w-[60px] rounded-full bg-[#e05a10]" />}
        </div>
      ))}
    </nav>
  );
}

function NavItem({ label, children }: { label: string; children: ReactNode }) {
  return (
    <div className="flex w-[201.300px] flex-col items-center pt-[9px]">
      <svg viewBox="0 0 64 60" className="h-[60px] w-16" fill="none" stroke="#666" strokeWidth="3">
        {children}
      </svg>
      <span className="mt-[22px]">{label}</span>
    </div>
  );
}

function BottomNav() {
  return (
    <nav className="mt-[8px] flex h-[176px] border-t border-[#d6d6d6] bg-[#f7f8fa] text-[35px] leading-none whitespace-nowrap text-[#666]">
      <div className="flex w-[275px] flex-col items-center pt-[9px]">
        <svg viewBox="0 0 20 8" className="h-2 w-5 fill-[#777]">
          <path d="M0 8L10 0L20 8Z" />
        </svg>
        <span className="mt-[14px] ml-[2px] text-[38.8px] text-[#d92f2f]">1192.08</span>
        <div className="mt-[13px] ml-[6px] flex items-center gap-[19px]">
          <span className="text-[35.3px]">生物制品</span>
          <span className="text-[36px] text-[#d92f2f]">0.78%</span>
        </div>
      </div>
      <NavItem label="交易">
        <path d="M17 10.500A26 26 0 0 1 57 40M46 52A26 26 0 0 1 8 17M1 20L9 16.500L8 24M63 38L55 43L56 35" />
        <path d="M22 17L32 28L42 17M32 28V45M23 30H41M23 38H41" />
      </NavItem>
      <NavItem label="发帖">
        <path d="M44 5H11Q6 5 6 10V50Q6 55 11 55H54Q58.500 55 58.500 50V19" />
        <path d="M24 38L26 30L49 8L54 13L31 35ZM52 5L55 2.500L60 7L57 10Z" fill="#666" stroke="none" />
      </NavItem>
      <NavItem label="功能">
        <rect x="8" y="6" width="21" height="21" rx="3" />
        <rect x="8" y="33" width="21" height="21" rx="3" />
        <rect x="35" y="33" width="21" height="21" rx="3" />
        <path d="M46 4L57 16.500L46 29L35 16.500Z" strokeLinejoin="round" />
      </NavItem>
      <NavItem label="设自选">
        <circle cx="32" cy="30" r="26.500" />
        <path d="M17.500 27.500h5v5h-5zM29.500 27.500h5v5h-5zM41.500 27.500h5v5h-5z" fill="#666" stroke="none" />
      </NavItem>
    </nav>
  );
}

export default function App() {
  return (
    <div className="h-[2400px] w-[1080px] overflow-hidden bg-white font-['Roboto','Noto_Sans_CJK_SC',sans-serif]">
      <StatusBar />
      <Header />
      <section className="flex h-[120px] items-center justify-between bg-[#fceee5] pr-[44px] pl-[36px] text-[42px] leading-none whitespace-nowrap text-[#e05a10]">
        <p className="mt-[5px]">一键开通科创成长层权限！把握打新、交易机会</p>
        <Cross className="size-[33px] stroke-[2.600]" />
      </section>
      <Quote />
      <Notice />
      <PeriodTabs />
      <AverageLegend />
      <PriceChart />
      <VolumeLegend />
      <VolumeChart />
      <TimeAxis />
      <Promo />
      <ContentTabs />
      <BottomNav />
    </div>
  );
}
